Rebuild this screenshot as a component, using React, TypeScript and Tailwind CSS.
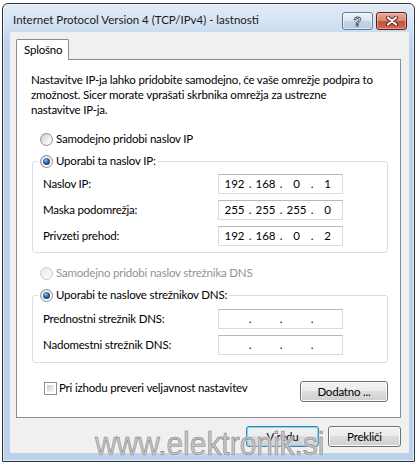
import { Fragment, type ReactNode } from 'react'

function Radio({ checked = false, disabled = false }: { checked?: boolean; disabled?: boolean }) {
  return (
    <span
      className={
        disabled
          ? 'w-[13px] h-[13px] shrink-0 rounded-full border border-[#c9c9c9] bg-[linear-gradient(135deg,#ececec,#fafafa)]'
          : 'w-[13px] h-[13px] shrink-0 rounded-full border border-[#8a8c8e] bg-[linear-gradient(135deg,#cfd0d1,#f4f4f4_70%,#ffffff)] flex items-center justify-center'
      }
    >
      {checked ? (
        <span className="w-[7px] h-[7px] rounded-full bg-[radial-gradient(circle_at_40%_35%,#8ec3f2,#2b5e9c_45%,#0c2448)] shadow-[0_0_0_1px_#ffffff]" />
      ) : null}
    </span>
  )
}

function Checkbox() {
  return (
    <span className="w-[13px] h-[13px] shrink-0 border border-[#8e8f8f] bg-white p-[2px]">
      <span className="block w-full h-full bg-[linear-gradient(135deg,#c9cacb,#eeeeee_70%,#f7f7f7)]" />
    </span>
  )
}

function IpField({ parts }: { parts: string[] }) {
  return (
    <div className="w-[125px] h-[20px] border border-[#d7dae0] border-t-[#b5b8bf] bg-white flex items-center pl-[2px] tracking-normal">
      {parts.map((p, i) => (
        <Fragment key={i}>
          {i > 0 && <span className="w-[4px] text-center">.</span>}
          <span className="w-[27px] text-center">{p}</span>
        </Fragment>
      ))}
    </div>
  )
}

function Btn({ children, primary = false, w }: { children: ReactNode; primary?: boolean; w: string }) {
  return (
    <div
      className={
        (primary
          ? 'border-[#3c7fb1] shadow-[inset_0_0_0_1px_#7fd7f7] '
          : 'border-[#707070] shadow-[inset_0_0_0_1px_#fbfbfb] ') +
        w +
        ' h-[21px] rounded-[3px] border flex items-center justify-center bg-[linear-gradient(#f2f2f2,#ebebeb_50%,#dddddd_50%,#cfcfcf)]'
      }
    >
      {children}
    </div>
  )
}

export default function App() {
  return (
    <div className="w-[420px] h-[466px] bg-white relative overflow-hidden pl-[2px] pt-[3px] [font-family:Lato,'Liberation_Sans',sans-serif] text-[11.5px] leading-[16px] text-black">
      <div className="w-[413px] h-[459px] border border-[#2f343a] rounded-t-[6px] bg-[linear-gradient(#e3ecf7,#cfdff1_24px,#bdd3eb_40px,#bcd2ea)] shadow-[inset_0_0_0_1px_rgba(255,255,255,0.55)] flex flex-col">
        {/* title bar */}
        <div className="h-[28px] flex items-start shrink-0">
          <div className="pl-[10px] pt-[8px] text-[#1b1b1b] whitespace-nowrap">Internet Protocol Version 4 (TCP/IPv4) - lastnosti</div>
          <div className="ml-auto flex gap-[3px] pt-[8px] pr-[7px]">
            <div className="w-[31px] h-[18px] rounded-[3px] border border-[#6b7c91] bg-[linear-gradient(#eef3f9,#dbe5f0_50%,#c4d4e6_50%,#b9cbe0)] shadow-[inset_0_0_0_1px_rgba(255,255,255,0.5)] flex items-center justify-center">
              <span className="text-[13px] leading-none font-bold text-white [-webkit-text-stroke:0.8px_#3d4b5c] [font-family:'Liberation_Sans',sans-serif]">?</span>
            </div>
            <div className="w-[31px] h-[18px] rounded-[3px] border border-[#5c1c16] bg-[linear-gradient(#e9ab9c,#d7836f_50%,#c4503a_50%,#cf6a52)] shadow-[inset_0_0_0_1px_rgba(255,210,200,0.5)] flex items-center justify-center">
              <svg width="12" height="10" viewBox="0 0 12 10">
                <path d="M2 1.5 L10 8.5 M10 1.5 L2 8.5" stroke="#5a1d16" strokeWidth="4" strokeLinecap="round" />
                <path d="M2 1.5 L10 8.5 M10 1.5 L2 8.5" stroke="#ffffff" strokeWidth="2.2" strokeLinecap="round" />
              </svg>
            </div>
          </div>
        </div>

        {/* client */}
        <div className="flex-1 ml-[7px] mr-[5px] mb-[8px] bg-[#f0f0f0] pl-[6px] pt-[7px] flex flex-col tracking-[-0.2px]">
          <div className="w-[53px] h-[21px] -mb-px relative z-10 border border-b-0 border-[#898c95] rounded-t-[2px] bg-white flex items-center pl-[7px]">
            Splošno
          </div>
          <div className="w-[385px] h-[359px] border border-[#898c95] bg-white flex flex-col">
            <p className="mt-[12px] pl-[14px] leading-[15px] whitespace-nowrap">
              Nastavitve IP-ja lahko pridobite samodejno, če vaše omrežje podpira to
              <br />
              zmožnost. Sicer morate vprašati skrbnika omrežja za ustrezne
              <br />
              nastavitve IP-ja.
            </p>

            <div className="mt-[14px] h-[16px] pl-[23px] flex items-center gap-[3px]">
              <Radio />
              <span>Samodejno pridobi naslov IP</span>
            </div>

            <fieldset className="mt-[6px] ml-[15px] mr-[12px] border border-[#d5dfe5] rounded-[3px] p-0">
              <legend className="ml-[5px] px-[2px]">
                <span className="h-[16px] flex items-center gap-[3px]">
                  <Radio checked />
                  <span>Uporabi ta naslov IP:</span>
                </span>
              </legend>
              <div className="pt-[5px] pb-[6px] pl-[10px] flex flex-col gap-[6px]">
                <div className="flex items-center">
                  <span className="w-[175px]">Naslov IP:</span>
                  <IpField parts={['192', '168', '0', '1']} />
                </div>
                <div className="flex items-center">
                  <span className="w-[175px]">Maska podomrežja:</span>
                  <IpField parts={['255', '255', '255', '0']} />
                </div>
                <div className="flex items-center">
                  <span className="w-[175px]">Privzeti prehod:</span>
                  <IpField parts={['192', '168', '0', '2']} />
                </div>
              </div>
            </fieldset>

            <div className="mt-[12px] h-[16px] pl-[23px] flex items-center gap-[3px] text-[#939393]">
              <Radio disabled />
              <span>Samodejno pridobi naslov strežnika DNS</span>
            </div>

            <fieldset className="mt-[6px] ml-[15px] mr-[12px] border border-[#d5dfe5] rounded-[3px] p-0">
              <legend className="ml-[5px] px-[2px]">
                <span className="h-[16px] flex items-center gap-[3px]">
                  <Radio checked />
                  <span>Uporabi te naslove strežnikov DNS:</span>
                </span>
              </legend>
              <div className="pt-[6px] pb-[7px] pl-[10px] flex flex-col gap-[6px]">
                <div className="flex items-center">
                  <span className="w-[175px]">Prednostni strežnik DNS:</span>
                  <IpField parts={['', '', '', '']} />
                </div>
                <div className="flex items-center">
                  <span className="w-[175px]">Nadomestni strežnik DNS:</span>
                  <IpField parts={['', '', '', '']} />
                </div>
              </div>
            </fieldset>

            <div className="mt-[18px] pl-[27px] pr-[12px] flex items-start">
              <div className="flex items-center gap-[2px] h-[14px]">
                <Checkbox />
                <span>Pri izhodu preveri veljavnost nastavitev</span>
              </div>
              <div className="ml-auto">
                <Btn w="w-[88px]">Dodatno ...</Btn>
              </div>
            </div>
          </div>

          <div className="w-[385px] mt-[8px] flex justify-end gap-[9px]">
            <Btn primary w="w-[73px]">V redu</Btn>
            <Btn w="w-[73px]">Prekliči</Btn>
          </div>
        </div>
      </div>

      {/* watermark */}
      <div className="absolute left-[95px] top-[426px] origin-left scale-x-[0.88] text-[34px] leading-[34px] whitespace-nowrap [font-family:'Liberation_Sans',sans-serif] text-[#c6c6c6] [-webkit-text-stroke:0.6px_#7a7a7a] [text-shadow:0_0_2px_#ffffff,0_0_2px_#ffffff]">
        www.elektronik.si
      </div>
    </div>
  )
}
